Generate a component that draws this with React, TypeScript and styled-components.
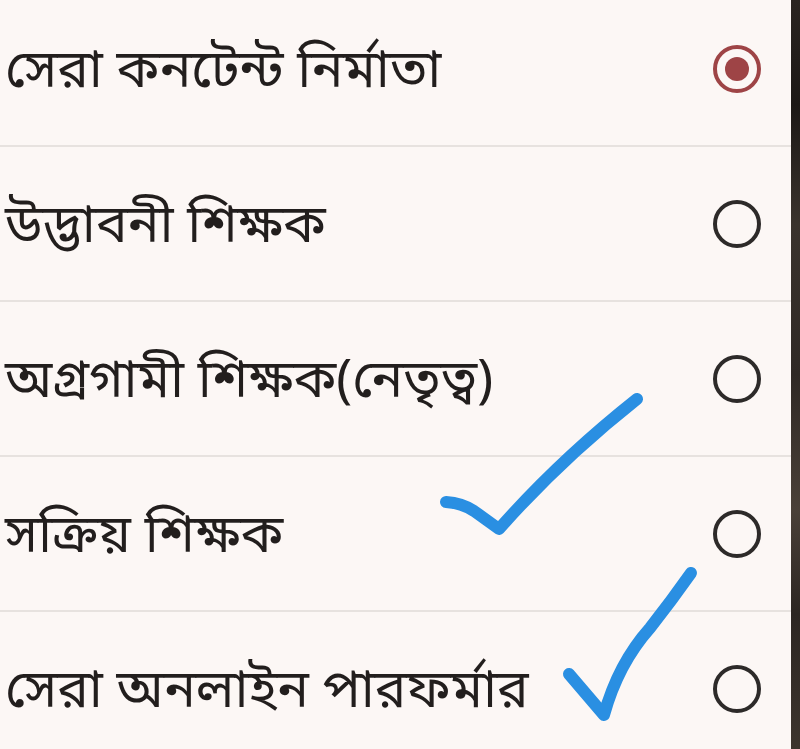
import React from "react";
import styled, { createGlobalStyle } from "styled-components";

const GlobalStyle = createGlobalStyle`
  html, body {
    margin: 0;
    padding: 0;
    background: #fcf7f5;
    overflow: hidden;
  }
  * {
    box-sizing: border-box;
  }
`;

const OPTIONS = [
  "সেরা কনটেন্ট নির্মাতা",
  "উদ্ভাবনী শিক্ষক",
  "অগ্রগামী শিক্ষক(নেতৃত্ব)",
  "সক্রিয় শিক্ষক",
  "সেরা অনলাইন পারফর্মার",
];

const Screen = styled.div`
  display: flex;
  align-items: stretch;
  width: 800px;
  height: 749px;
  overflow: hidden;
  position: relative;
  background: #fcf7f5;
`;

const List = styled.div`
  flex: 1;
  min-width: 0;
  display: flex;
  flex-direction: column;
  margin-top: -8px;
`;

const Row = styled.label`
  display: flex;
  align-items: center;
  justify-content: space-between;
  height: 155px;
  flex-shrink: 0;
  padding: 0 30px 0 5px;
  border-bottom: 2px solid #e7e2df;
  cursor: pointer;
`;

const Label = styled.span`
  font-family: "Noto Sans Bengali", "Noto Sans", "DejaVu Sans", sans-serif;
  font-size: 53px;
  font-weight: 400;
  color: #221e1d;
  white-space: nowrap;
  padding-top: 10px;
`;

const Radio = styled.span<{ $checked: boolean }>`
  width: 48px;
  height: 48px;
  flex-shrink: 0;
  border-radius: 50%;
  border: 4px solid ${({ $checked }) => ($checked ? "#9e4446" : "#2d2a29")};
  display: flex;
  align-items: center;
  justify-content: center;
  &::after {
    content: "";
    width: 24px;
    height: 24px;
    border-radius: 50%;
    background: #9e4446;
    display: ${({ $checked }) => ($checked ? "block" : "none")};
  }
`;

const Edge = styled.div`
  width: 9px;
  height: 749px;
  flex-shrink: 0;
  background: linear-gradient(
    180deg,
    #2a2420 0%,
    #1c1816 14%,
    #3a332d 30%,
    #2f2925 50%,
    #4a4038 68%,
    #2c2622 82%,
    #3d352e 100%
  );
`;

const Marks = styled.svg`
  position: absolute;
  inset: 0;
  pointer-events: none;
`;

const App = () => {
  const [selected, setSelected] = React.useState(0);
  return (
    <>
      <GlobalStyle />
      <Screen>
        <List>
          {OPTIONS.map((text, index) => (
            <Row key={text} onClick={() => setSelected(index)}>
              <Label>{text}</Label>
              <Radio $checked={selected === index} />
            </Row>
          ))}
        </List>
        <Edge />
        <Marks width="800" height="749" viewBox="0 0 800 749">
          <g
            fill="none"
            stroke="#2a8fe2"
            strokeWidth="12"
            strokeLinecap="round"
            strokeLinejoin="round"
          >
            <path d="M446 502 Q462 503 474 511 L499 529 Q560 460 637 399" />
            <path d="M569 674 L604 715 Q618 664 650 628 Q672 600 691 573" />
          </g>
        </Marks>
      </Screen>
    </>
  );
};

export default App;
